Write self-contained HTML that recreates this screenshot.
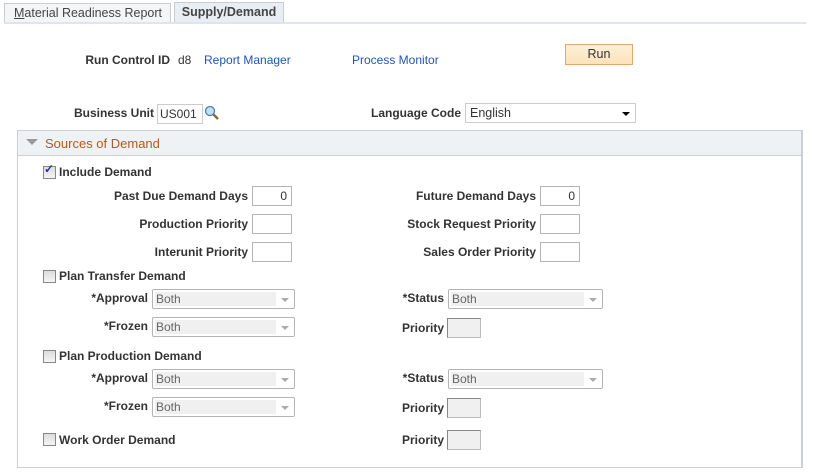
<!DOCTYPE html>
<html><head><style>
body{margin:0;width:816px;height:475px;background:#fff;position:relative;font-family:"Liberation Sans",Arial,sans-serif;font-size:12px;color:#333;overflow:hidden}
.a{position:absolute;white-space:nowrap}
.l{position:absolute;white-space:nowrap;font-weight:bold;color:#333;text-align:right;line-height:14px}
.lk{color:#1f55b5}
.in{position:absolute;box-sizing:border-box;border:1px solid #b4b4b4;background:#fff;height:20px;line-height:18px;text-align:right;padding-right:4px}
.sel{position:absolute;box-sizing:border-box;border:1px solid #b4b4b4;border-radius:2px;background:#fff;height:20px;line-height:18px;padding-left:3px;color:#777}
.sel .f{position:absolute;left:2px;top:2px;bottom:2px;right:18px;background:#f0f0f0}
.sel span{position:relative;color:#666}
.sel i{position:absolute;right:5px;top:8px;border-left:4px solid transparent;border-right:4px solid transparent;border-top:4px solid #aaa}
.pr{position:absolute;box-sizing:border-box;border:1px solid #bbb;border-left-color:#888;border-top-color:#888;background:#f0f0f0;width:34px;height:20px}
.cb{position:absolute;box-sizing:border-box;width:13px;height:13px;border:1px solid #888;background:linear-gradient(#ddd,#f4f4f4)}
</style></head><body>
<div class="a" style="left:4px;top:3px;width:167px;height:19px;box-sizing:border-box;border:1px solid #c8cdd3;border-bottom:none;background:#f3f5f7;line-height:18px;padding-left:9px;font-size:12.5px;color:#444"><u>M</u>aterial Readiness Report</div>
<div class="a" style="left:174px;top:2px;width:110px;height:20px;box-sizing:border-box;border:1px solid #c8cdd3;border-bottom:none;background:#e9eef4;line-height:19px;text-align:center;font-weight:bold;font-size:12.5px;color:#444">Supply/Demand</div>
<div class="a" style="left:4px;top:22px;width:802px;height:2px;background:#dfe5ec"></div>

<div class="l" style="right:646px;top:53px">Run Control ID</div>
<div class="a" style="left:178px;top:53px">d8</div>
<div class="a lk" style="left:204px;top:53px">Report Manager</div>
<div class="a lk" style="left:352px;top:53px">Process Monitor</div>
<div class="a" style="left:565px;top:44px;width:68px;height:21px;box-sizing:border-box;border:1px solid #e0a86a;background:linear-gradient(#fdf0d8,#fbe3bb);text-align:center;line-height:19px;font-size:12.5px;color:#333">Run</div>

<div class="l" style="right:662px;top:106px">Business Unit</div>
<div class="in" style="left:157px;top:104px;width:46px;text-align:left;padding-left:2px;color:#333;border-color:#ccc">US001</div>
<svg class="a" style="left:204px;top:105px" width="16" height="16"><circle cx="6" cy="6" r="4.5" fill="#bfe0f5" stroke="#4a7fb0" stroke-width="1.3"/><line x1="9.5" y1="9.5" x2="14" y2="14" stroke="#8a6a3a" stroke-width="2.5"/></svg>
<div class="l" style="right:355px;top:106px">Language Code</div>
<div class="a" style="left:465px;top:103px;width:171px;height:20px;box-sizing:border-box;border:1px solid #ccc;line-height:18px;padding-left:4px;color:#333;font-size:12.5px">English<i style="position:absolute;right:5px;top:8px;border-left:4px solid transparent;border-right:4px solid transparent;border-top:4px solid #000"></i></div>

<div class="a" style="left:17px;top:130px;width:786px;height:338px;box-sizing:border-box;border:1px solid #cbd0d6;border-right-width:2px"></div>
<div class="a" style="left:18px;top:131px;width:783px;height:24px;background:#eff2f4;border-bottom:1px solid #cbd0d6"></div>
<div class="a" style="left:26px;top:139px;border-left:6px solid transparent;border-right:6px solid transparent;border-top:6px solid #999"></div>
<div class="a" style="left:45px;top:136px;color:#b5581c;font-size:13px">Sources of Demand</div>

<div class="cb" style="left:43px;top:166px"></div><div class="a" style="left:44px;top:162px;color:#30309a;font-size:12px;font-weight:bold">✓</div>
<div class="l" style="left:59px;top:165px;text-align:left">Include Demand</div>
<div class="l" style="right:568px;top:189px">Past Due Demand Days</div>
<div class="in" style="left:252px;top:186px;width:40px">0</div>
<div class="l" style="right:280px;top:189px">Future Demand Days</div>
<div class="in" style="left:540px;top:186px;width:40px">0</div>
<div class="l" style="right:568px;top:217px">Production Priority</div>
<div class="in" style="left:252px;top:214px;width:40px"></div>
<div class="l" style="right:280px;top:217px">Stock Request Priority</div>
<div class="in" style="left:540px;top:214px;width:40px"></div>
<div class="l" style="right:568px;top:245px">Interunit Priority</div>
<div class="in" style="left:252px;top:242px;width:40px"></div>
<div class="l" style="right:280px;top:245px">Sales Order Priority</div>
<div class="in" style="left:540px;top:242px;width:40px"></div>

<div class="cb" style="left:43px;top:270px"></div>
<div class="l" style="left:59px;top:269px;text-align:left">Plan Transfer Demand</div>
<div class="l" style="right:668px;top:291px">*Approval</div>
<div class="sel" style="left:152px;top:289px;width:143px"><div class="f"></div><span>Both</span><i></i></div>
<div class="l" style="right:372px;top:291px">*Status</div>
<div class="sel" style="left:448px;top:289px;width:155px"><div class="f"></div><span>Both</span><i></i></div>
<div class="l" style="right:668px;top:319px">*Frozen</div>
<div class="sel" style="left:152px;top:317px;width:143px"><div class="f"></div><span>Both</span><i></i></div>
<div class="l" style="right:372px;top:321px">Priority</div>
<div class="pr" style="left:447px;top:318px"></div>

<div class="cb" style="left:43px;top:350px"></div>
<div class="l" style="left:59px;top:349px;text-align:left">Plan Production Demand</div>
<div class="l" style="right:668px;top:371px">*Approval</div>
<div class="sel" style="left:152px;top:369px;width:143px"><div class="f"></div><span>Both</span><i></i></div>
<div class="l" style="right:372px;top:371px">*Status</div>
<div class="sel" style="left:448px;top:369px;width:155px"><div class="f"></div><span>Both</span><i></i></div>
<div class="l" style="right:668px;top:399px">*Frozen</div>
<div class="sel" style="left:152px;top:397px;width:143px"><div class="f"></div><span>Both</span><i></i></div>
<div class="l" style="right:372px;top:401px">Priority</div>
<div class="pr" style="left:447px;top:398px"></div>

<div class="cb" style="left:43px;top:433px"></div>
<div class="l" style="left:59px;top:433px;text-align:left">Work Order Demand</div>
<div class="l" style="right:372px;top:433px">Priority</div>
<div class="pr" style="left:447px;top:430px"></div>
</body></html>
